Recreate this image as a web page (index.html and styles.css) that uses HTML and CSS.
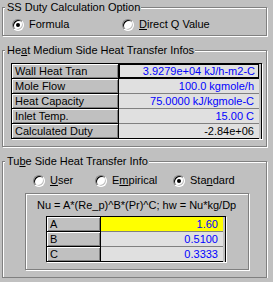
FILE: index.html
```html
<!DOCTYPE html>
<html lang="en">
<head>
    <meta charset="UTF-8">
    <meta name="viewport" content="width=device-width, initial-scale=1.0">
    <title>SS Duty</title>
    <link rel="stylesheet" href="styles.css">
</head>
<body>
    <fieldset class="group group-option">
        <legend>SS Duty Calculation Option</legend>
        <div class="radio-row option-row">
            <div class="radio-item"><span class="radio on"></span><span>Formula</span></div>
            <div class="radio-item"><span class="radio"></span><span><u>D</u>irect Q Value</span></div>
        </div>
    </fieldset>

    <fieldset class="group group-medium">
        <legend>He<u>a</u>t Medium Side Heat Transfer Infos</legend>
        <div class="grid grid-medium">
            <div class="key">Wall Heat Tran</div>
            <div class="val focus">3.9279e+04 kJ/h-m2-C</div>
            <div class="key">Mole Flow</div>
            <div class="val">100.0 kgmole/h</div>
            <div class="key">Heat Capacity</div>
            <div class="val">75.0000 kJ/kgmole-C</div>
            <div class="key">Inlet Temp.</div>
            <div class="val">15.00 C</div>
            <div class="key last">Calculated Duty</div>
            <div class="val last calc">-2.84e+06</div>
        </div>
    </fieldset>

    <fieldset class="group group-tube">
        <legend>Tu<u>b</u>e Side Heat Transfer Info</legend>
        <div class="radio-row tube-row">
            <div class="radio-item"><span class="radio"></span><span><u>U</u>ser</span></div>
            <div class="radio-item"><span class="radio"></span><span>E<u>m</u>pirical</span></div>
            <div class="radio-item"><span class="radio on"></span><span>Sta<u>n</u>dard</span></div>
        </div>
        <div class="panel">
            <div class="formula">Nu = A*(Re_p)^B*(Pr)^C; hw = Nu*kg/Dp</div>
            <div class="grid grid-coef">
                <div class="key">A</div>
                <div class="val hilite">1.60</div>
                <div class="key">B</div>
                <div class="val">0.5100</div>
                <div class="key last">C</div>
                <div class="val last">0.3333</div>
            </div>
        </div>
    </fieldset>
</body>
</html>
```

FILE: styles.css
```css
body {
    margin: 0;
    padding: 1px 0 0 2px;
    background: #c0c0c0;
    font-family: "Liberation Sans", Arial, sans-serif;
    font-size: 11px;
    line-height: 13px;
    color: #000;
}
u {
    text-decoration: underline;
    text-underline-offset: 1px;
}
.group {
    box-sizing: border-box;
    width: 265px;
    min-width: 0;
    margin: 0;
    border: 1px solid #808080;
    box-shadow: 1px 1px 0 #fff, inset 1px 1px 0 #fff;
}
.group + .group {
    margin-top: 8px;
}
.group legend {
    margin-left: 2px;
    padding: 0 1px 0 2px;
    line-height: 13px;
    background: #c0c0c0;
}
.group-option {
    padding: 4px 0 4px 0;
}
.group-medium {
    padding: 6px 0 7px 0;
}
.group-tube {
    padding: 6px 0 7px 0;
}

/* radio buttons */
.radio-row {
    display: grid;
    height: 13px;
}
.option-row {
    padding-left: 9px;
    grid-template-columns: 110px auto;
}
.tube-row {
    padding-left: 30px;
    grid-template-columns: 62px 78px auto;
}
.radio-item {
    display: flex;
    align-items: center;
    gap: 5px;
    white-space: nowrap;
}
.radio {
    position: relative;
    flex: none;
    box-sizing: border-box;
    width: 12px;
    height: 12px;
    border-radius: 50%;
    background: #fff;
    border: 1px solid;
    border-color: #808080 #fff #fff #808080;
    box-shadow: inset 1px 1px 0 #000, inset -1px -1px 0 #c0c0c0;
}
.radio.on::after {
    content: "";
    position: absolute;
    left: 3px;
    top: 3px;
    width: 4px;
    height: 4px;
    border-radius: 50%;
    background: #000;
}

/* string grids */
.grid {
    display: grid;
    border-top: 1px solid #000;
    border-left: 1px solid #000;
    border-right: 1px solid #000;
    box-shadow: 1px 1px 0 #fff;
}
.grid-medium {
    width: 249px;
    margin-left: 8px;
    grid-template-columns: 107px 140px;
}
.grid-coef {
    width: 178px;
    margin-left: 9px;
    grid-template-columns: 54px 122px;
}
.key {
    box-sizing: border-box;
    height: 15px;
    padding-left: 3px;
    line-height: 14px;
    border-right: 1px solid #000;
    border-bottom: 1px solid #000;
    box-shadow: inset 1px 1px 0 #fff, inset -1px -1px 0 #808080;
    white-space: nowrap;
    overflow: hidden;
}
.val {
    box-sizing: border-box;
    height: 15px;
    padding-right: 5px;
    line-height: 14px;
    text-align: right;
    color: #0000ff;
    background: #e0e0e0;
    border-bottom: 1px solid #808080;
    white-space: nowrap;
    overflow: hidden;
}
.val.last {
    border-bottom-color: #000;
}
.val.focus {
    padding-right: 4px;
    border-bottom-color: #000;
    box-shadow: inset 0 0 0 1px #000;
}
.val.calc {
    color: #000;
}
.val.hilite {
    background: #ffff00;
}

/* formula panel */
.panel {
    box-sizing: border-box;
    width: 224px;
    margin: 6px 0 0 22px;
    padding: 5px 0 7px 11px;
    border: 1px solid #808080;
    box-shadow: 1px 1px 0 #fff, inset 1px 1px 0 #fff;
}
.formula {
    height: 13px;
    margin-bottom: 4px;
    white-space: nowrap;
}
```
